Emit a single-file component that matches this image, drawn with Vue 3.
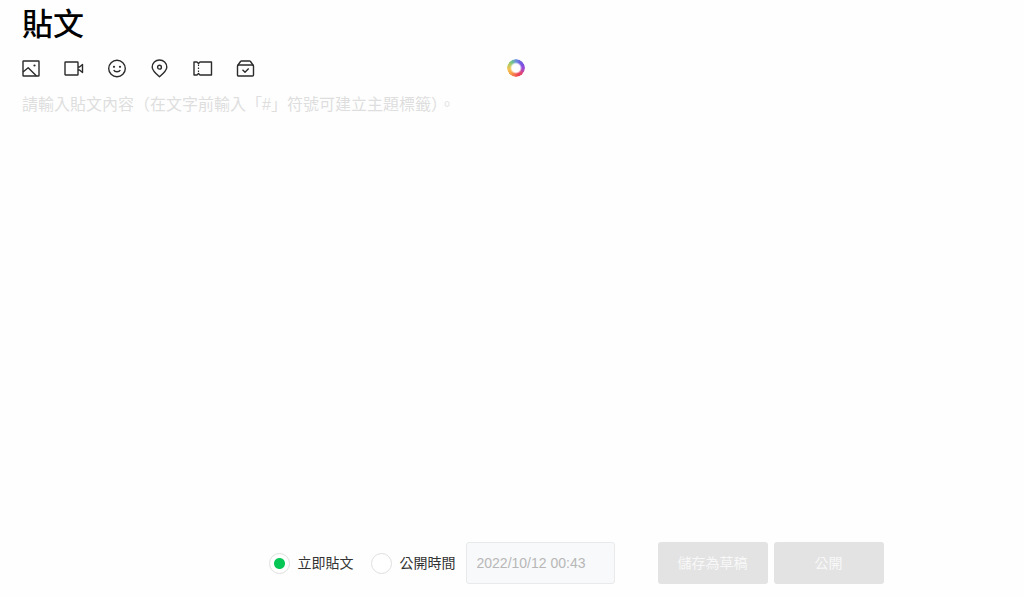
<script setup>
import {ref,computed} from 'vue'

const content=ref('')
const timing=ref('now')//now代表立即貼文 later代表指定公開時間
const publishTime=ref('2022/10/12 00:43')

const canSubmit=computed(()=>content.value.trim()!='')

//圓環的漸層 每一段的顏色
const ringColors=['#6a8fe0','#6f62e0','#7d4fe0','#a548cf','#e04778','#ef4352','#f5754b','#f8a94c','#f3c34f','#b9cb62','#6fc28d']
const ringStyle={
  background:`conic-gradient(${ringColors.join(',')},${ringColors[0]})`
}
</script>

<template>
  <main class="app">
    <h1>貼文</h1>

    <div class="toolbar">
      <button type="button" class="tool" aria-label="圖片">
        <svg viewBox="0 0 20 20">
          <rect x="2" y="3" width="16" height="15" rx="0.5"/>
          <path d="M2 14 7.200 9.800 15.500 18"/>
          <circle class="dot" cx="13.500" cy="7.500" r="1.1"/>
        </svg>
      </button>
      <button type="button" class="tool" aria-label="影片">
        <svg viewBox="0 0 20 20">
          <rect x="1" y="4" width="13" height="13" rx="0.5"/>
          <path d="M14 9 15.500 9 18.500 6.500V14.500L15.500 12H14"/>
        </svg>
      </button>
      <button type="button" class="tool" aria-label="表情">
        <svg viewBox="0 0 20 20">
          <circle cx="10" cy="10.500" r="8.3"/>
          <circle class="dot" cx="7" cy="8.800" r="1.1"/>
          <circle class="dot" cx="13" cy="8.800" r="1.1"/>
          <path d="M6.700 12c1.200 2.400 5.400 2.400 6.600 0"/>
        </svg>
      </button>
      <button type="button" class="tool" aria-label="地點">
        <svg viewBox="0 0 20 20">
          <path d="M9.500 18.800C6 15.800 2.200 12.500 2.200 9.200a7.300 7.200 0 0 1 14.600 0c0 3.300-3.800 6.600-7.300 9.600z"/>
          <circle cx="9.500" cy="9.200" r="1.900"/>
        </svg>
      </button>
      <button type="button" class="tool" aria-label="優惠券">
        <svg viewBox="0 0 20 20">
          <path d="M1 4H4L5.500 5.500 7 4H18.500V17H7L5.500 15.500 4 17H1z"/>
          <path class="dashed" d="M5.500 6.500V15"/>
        </svg>
      </button>
      <button type="button" class="tool" aria-label="問卷調查">
        <svg viewBox="0 0 20 20">
          <rect x="1.500" y="7" width="16" height="11" rx="1"/>
          <path d="M1.700 7.500 4.500 3.500Q4.800 3 5.500 3H13.500Q14.200 3 14.500 3.500L17.300 7.500"/>
          <path d="M6.500 11.800 9 14.200 12.700 10.500"/>
        </svg>
      </button>
      <button type="button" class="tool ring" :style="ringStyle" aria-label="背景顏色"></button>
    </div>

    <textarea
      v-model="content"
      class="content"
      aria-label="貼文內容"
      placeholder="請輸入貼文內容（在文字前輸入「#」符號可建立主題標籤）。"
    ></textarea>

    <footer class="actions">
      <label class="option">
        <input type="radio" name="timing" value="now" v-model="timing"/>
        <span>立即貼文</span>
      </label>
      <label class="option">
        <input type="radio" name="timing" value="later" v-model="timing"/>
        <span>公開時間</span>
      </label>
      <input
        type="text"
        class="date"
        v-model="publishTime"
        aria-label="公開時間"
        :disabled="timing!='later'"
      />
      <div class="buttons">
        <button type="button" class="submit" :disabled="!canSubmit">儲存為草稿</button>
        <button type="button" class="submit" :disabled="!canSubmit">公開</button>
      </div>
    </footer>
  </main>
</template>

<style>
  body{
    background-color: #fefefe;
  }
</style>

<style scoped>
  *{
    margin: 0;
    padding: 0;
    box-sizing: border-box;
    font-family: 'Liberation Sans','Noto Sans CJK TC',sans-serif;
  }

  .app{
    display: flex;
    flex-direction: column;
    min-height: 100vh;
    padding: 5px 21px 13px;
  }

  h1{
    padding-left: 1px;
    font-size: 31px;
    font-weight: 500;
    line-height: 40px;
    color: #000;
  }

  .toolbar{
    display: flex;
    align-items: center;
    gap: 23px;
    margin-top: 13px;
  }
  .tool{
    width: 20px;
    height: 20px;
    border: none;
    background: none;
    cursor: pointer;
  }
  .tool svg{
    display: block;
    width: 20px;
    height: 20px;
    fill: none;
    stroke: #2b2b2b;
    stroke-width: 1.4;
    stroke-linejoin: round;
  }
  .tool .dot{
    fill: #2b2b2b;
    stroke: none;
  }
  .tool .dashed{
    stroke-width: 1.2;
    stroke-dasharray: 1.5 1.5;
  }
  .tool.ring{
    width: 18px;
    height: 18px;
    margin-left: 228px;
    border-radius: 50%;
    mask: radial-gradient(circle,transparent 4px,#000 6px);
  }

  .content{
    flex: 1;
    width: 100%;
    margin-top: 15px;
    padding: 0 1px;
    border: none;
    outline: none;
    resize: none;
    background: none;
    font-size: 16px;
    line-height: 24px;
    color: #222;
  }
  .content::placeholder{
    color: #dedede;
    opacity: 1;
  }

  .actions{
    display: flex;
    align-items: center;
    justify-content: center;
    padding-left: 128px;
  }
  .option{
    display: flex;
    align-items: center;
    gap: 8px;
    margin-right: 17px;
    font-size: 14px;
    line-height: 20px;
    white-space: nowrap;
    color: #333;
    cursor: pointer;
  }
  .option + .option{
    margin-right: 10px;
  }
  .option input{
    appearance: none;
    width: 21px;
    height: 21px;
    border: 1px solid #dfdfdf;
    border-radius: 50%;
    background-color: #fff;
  }
  .option input:checked{
    background-image: radial-gradient(circle,#06c755 5px,transparent 6px);
  }

  .date{
    width: 149px;
    height: 42px;
    padding: 0 10px;
    border: 1px solid #e8e9ea;
    border-radius: 3px;
    background-color: #f8f9fa;
    font-size: 14px;
    color: #b7b7b7;
  }

  .buttons{
    display: flex;
    gap: 6px;
    margin-left: 43px;
  }
  .submit{
    width: 110px;
    height: 42px;
    padding-bottom: 2px;
    border: none;
    border-radius: 3px;
    background-color: #06c755;
    font-size: 14px;
    color: #fff;
    cursor: pointer;
  }
  .submit:disabled{
    background-color: #e3e3e3;
    color: #f8f8f8;
    cursor: default;
  }
</style>
